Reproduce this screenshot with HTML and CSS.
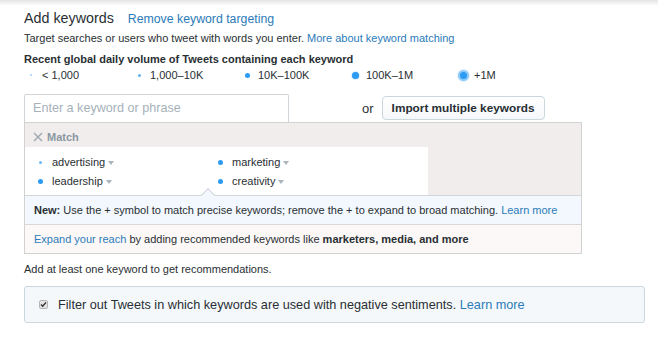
FILE: index.html
```html
<!DOCTYPE html>
<html lang="en">
<head>
<meta charset="utf-8">
<title>Add keywords</title>
<link rel="stylesheet" href="styles.css">
</head>
<body>
<div class="page">
  <div class="title-row">
    <h1 class="title">Add keywords</h1>
    <a class="link remove" href="#">Remove keyword targeting</a>
  </div>
  <p class="desc">Target searches or users who tweet with words you enter. <a class="link" href="#">More about keyword matching</a></p>
  <p class="vol-title">Recent global daily volume of Tweets containing each keyword</p>
  <ul class="legend">
    <li class="legend-item"><span class="dot-wrap"><span class="dot d1"></span></span>&lt; 1,000</li>
    <li class="legend-item"><span class="dot-wrap"><span class="dot d2"></span></span>1,000–10K</li>
    <li class="legend-item"><span class="dot-wrap"><span class="dot d3"></span></span>10K–100K</li>
    <li class="legend-item"><span class="dot-wrap"><span class="dot d4"></span></span>100K–1M</li>
    <li class="legend-item"><span class="dot-wrap"><span class="dot d5"></span></span>+1M</li>
  </ul>
  <div class="entry-row">
    <div class="kw-input">Enter a keyword or phrase</div>
    <span class="or">or</span>
    <button class="import" type="button">Import multiple keywords</button>
  </div>
  <div class="match-panel">
    <div class="match-head">
      <svg class="x-icon" width="10" height="10" viewBox="0 0 10 10"><path d="M1 1L9 9M9 1L1 9" stroke="#9aa7b0" stroke-width="1.3" fill="none"/></svg>
      <span>Match</span>
    </div>
    <div class="match-body">
      <div class="examples">
        <div class="kw"><span class="dot-wrap"><span class="dot k1"></span></span>advertising<span class="caret"></span></div>
        <div class="kw"><span class="dot-wrap"><span class="dot k2"></span></span>marketing<span class="caret"></span></div>
        <div class="kw"><span class="dot-wrap"><span class="dot k2"></span></span>leadership<span class="caret"></span></div>
        <div class="kw"><span class="dot-wrap"><span class="dot k2"></span></span>creativity<span class="caret"></span></div>
      </div>
      <div class="match-side"></div>
    </div>
    <div class="notice"><b>New:</b> Use the + symbol to match precise keywords; remove the + to expand to broad matching. <a class="link" href="#">Learn more</a></div>
    <div class="expand"><a class="link" href="#">Expand your reach</a> by adding recommended keywords like <b>marketers, media, and more</b></div>
  </div>
  <p class="hint">Add at least one keyword to get recommendations.</p>
  <label class="filter">
    <svg class="check" width="9" height="9" viewBox="0 0 9 9"><rect x="0.5" y="0.5" width="8" height="8" rx="1.5" fill="#e4e4e4" stroke="#b5b5b5"/><path d="M2 4.6L3.7 6.3L7 2.4" stroke="#333" stroke-width="1.4" fill="none"/></svg>
    <span>Filter out Tweets in which keywords are used with negative sentiments. <a class="link" href="#">Learn more</a></span>
  </label>
</div>
</body>
</html>
```

FILE: styles.css
```css
* { box-sizing: border-box; }
html, body { margin: 0; padding: 0; }
body {
  width: 658px;
  height: 340px;
  overflow: hidden;
  font-family: "Liberation Sans", Arial, sans-serif;
  color: #292f33;
  background: linear-gradient(#e4e4e4, #ffffff 6px) no-repeat #fff;
}
.page { padding: 8px 0 0 24px; }
.link { color: #2b7bb9; text-decoration: none; }

.title-row { display: flex; align-items: baseline; gap: 14px; height: 20px; }
.title { margin: 0; font-size: 14.3px; font-weight: normal; line-height: 20px; }
.remove { font-size: 12.3px; }

.desc { margin: 2px 0 0; font-size: 11px; line-height: 16px; }
.vol-title { margin: 6px 0 0; font-size: 11px; line-height: 15px; font-weight: bold; }

.legend { list-style: none; margin: 0; padding: 0; display: flex; font-size: 11px; line-height: 16px; }
.legend-item { width: 108px; display: flex; align-items: center; }
.dot-wrap { width: 14px; height: 16px; display: inline-flex; align-items: center; justify-content: center; margin-right: 4px; }
.dot { display: block; border-radius: 50%; background: #2b9bf4; }
.d1 { width: 2px; height: 2px; background: #9fcff6; }
.d2 { width: 3px; height: 3px; background: #5fb3f5; }
.d3 { width: 5px; height: 5px; }
.d4 { width: 7px; height: 7px; box-shadow: 0 0 1px 0.5px #b9dcf9; }
.d5 { width: 7px; height: 7px; box-shadow: 0 0 0 2px rgba(43, 155, 244, 0.45), 0 0 1px 3px rgba(43, 155, 244, 0.15); }

.entry-row { display: flex; align-items: center; margin-top: 11px; height: 28px; }
.kw-input {
  width: 265px; height: 28px;
  border: 1px solid #cfd4d8; border-bottom: none;
  border-radius: 2px 2px 0 0;
  padding: 0 8px;
  font-size: 12.6px; line-height: 26px; color: #a6b1ba;
}
.or { margin-left: 73px; font-size: 13px; }
.import {
  margin-left: 8px; height: 24px; width: 163px;
  border: 1px solid #ccd6dd; border-radius: 4px;
  background: linear-gradient(#fff, #f5f8fa);
  font-family: inherit; font-size: 11.8px; font-weight: bold; color: #292f33;
  padding: 0;
}

.match-panel { width: 558px; border: 1px solid #d2d2d2; border-top: none; }
.match-head {
  height: 25px; background: #f1edec;
  border-top: 1px solid #d2d2d2;
  display: flex; align-items: center; padding: 3px 0 0 8px; gap: 4px;
  font-size: 11px; font-weight: bold; color: #8a98a3;
}
.x-icon { display: block; }
.match-body { display: flex; height: 48px; }
.examples {
  width: 403px; background: #fff;
  display: grid; grid-template-columns: 180px 180px; row-gap: 3px;
  padding: 7px 0 0 9px; align-content: start;
}
.match-side { flex: 1; background: #f1edec; }
.kw { display: flex; align-items: center; font-size: 11px; line-height: 16px; }
.kw .dot-wrap { width: 12px; margin-right: 6px; }
.k1 { width: 3px; height: 3px; background: #6cb8f5; }
.k2 { width: 5px; height: 5px; }
.caret { display: inline-block; margin-left: 3px; margin-top: 1px; border-left: 3.5px solid transparent; border-right: 3.5px solid transparent; border-top: 4px solid #aab4bc; }

.notice {
  position: relative;
  height: 29px; background: #f2f8fd;
  border-top: 1px solid #d2d6da;
  padding-left: 9px;
  font-size: 11px; line-height: 28px; white-space: nowrap;
}
.notice::before {
  content: ""; position: absolute; top: -6px; left: 178px;
  width: 9px; height: 9px; background: #f2f8fd;
  border-top: 1px solid #d2d6da; border-left: 1px solid #d2d6da;
  transform: rotate(45deg);
}
.expand {
  height: 29px; background: #fbf8f7;
  border-top: 1px solid #d8d8d8;
  padding-left: 9px;
  font-size: 11px; line-height: 28px; white-space: nowrap;
}
.hint { margin: 7px 0 0; font-size: 11px; line-height: 16px; }
.filter {
  margin-top: 9px; width: 621px; height: 37px;
  border: 1px solid #ccd6dd; border-radius: 3px; background: #f5f8fa;
  display: flex; align-items: center; padding-left: 14px; gap: 10px;
  font-size: 12.7px;
}
.check { display: block; }
```
